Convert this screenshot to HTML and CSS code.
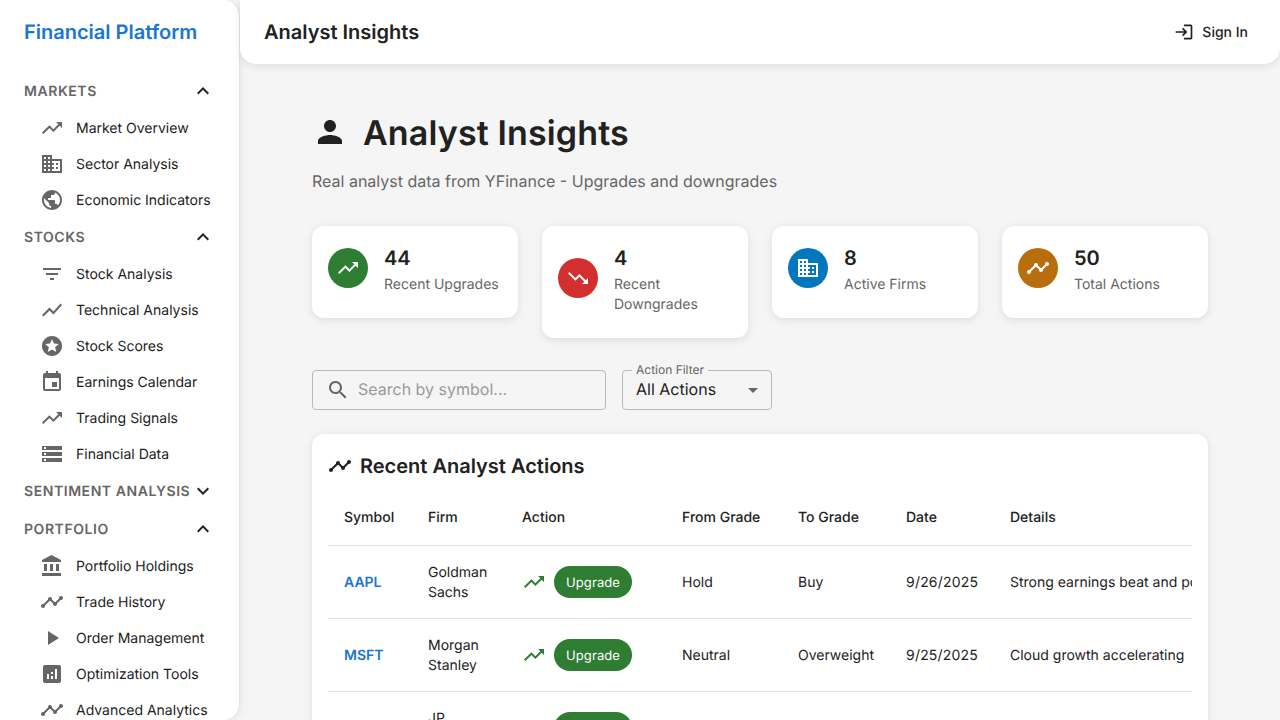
FILE: index.html
```html
<!DOCTYPE html>
<html>

<head>
    <title>Analyst Insights</title>
    <link rel="stylesheet" href="styles.css">
</head>

<body>
    <svg class="sprites" width="0" height="0">
        <symbol id="i-up" viewBox="0 0 24 24"><path d="M16 6l2.29 2.29-4.88 4.88-4-4L2 16.59 3.41 18l6-6 4 4 6.3-6.29L22 12V6z"/></symbol>
        <symbol id="i-down" viewBox="0 0 24 24"><path d="M16 18l2.29-2.29-4.88-4.88-4 4L2 7.41 3.41 6l6 6 4-4 6.3 6.29L22 12v6z"/></symbol>
        <symbol id="i-business" viewBox="0 0 24 24"><path d="M12 7V3H2v18h20V7H12zM6 19H4v-2h2v2zm0-4H4v-2h2v2zm0-4H4V9h2v2zm0-4H4V5h2v2zm4 12H8v-2h2v2zm0-4H8v-2h2v2zm0-4H8V9h2v2zm0-4H8V5h2v2zm10 12h-8v-2h2v-2h-2v-2h2v-2h-2V9h8v10zm-2-8h-2v2h2v-2zm0 4h-2v2h2v-2z"/></symbol>
        <symbol id="i-public" viewBox="0 0 24 24"><path d="M12 2C6.48 2 2 6.48 2 12s4.48 10 10 10 10-4.48 10-10S17.52 2 12 2zm-1 17.93c-3.95-.49-7-3.85-7-7.93 0-.62.08-1.21.21-1.79L9 15v1c0 1.1.9 2 2 2v1.93zm6.9-2.54c-.26-.81-1-1.39-1.9-1.39h-1v-3c0-.55-.45-1-1-1H8v-2h2c.55 0 1-.45 1-1V7h2c1.1 0 2-.9 2-2v-.41c2.93 1.19 5 4.06 5 7.41 0 2.08-.8 3.97-2.1 5.39z"/></symbol>
        <symbol id="i-filter" viewBox="0 0 24 24"><path d="M10 18h4v-2h-4v2zM3 6v2h18V6H3zm3 7h12v-2H6v2z"/></symbol>
        <symbol id="i-chart" viewBox="0 0 24 24"><path d="M3.5 18.49l6-6.01 4 4L22 6.92l-1.41-1.41-7.09 7.97-4-4L2 16.99z"/></symbol>
        <symbol id="i-stars" viewBox="0 0 24 24"><path d="M11.99 2C6.47 2 2 6.48 2 12s4.47 10 9.99 10C17.52 22 22 17.52 22 12S17.52 2 11.99 2zm4.24 16L12 15.45 7.77 18l1.12-4.81-3.73-3.23 4.92-.42L12 5l1.92 4.53 4.92.42-3.73 3.23L16.23 18z"/></symbol>
        <symbol id="i-event" viewBox="0 0 24 24"><path d="M17 12h-5v5h5v-5zM16 1v2H8V1H6v2H5c-1.11 0-1.99.9-1.99 2L3 19c0 1.1.89 2 2 2h14c1.1 0 2-.9 2-2V5c0-1.1-.9-2-2-2h-1V1h-2zm3 18H5V8h14v11z"/></symbol>
        <symbol id="i-storage" viewBox="0 0 24 24"><path d="M2 20h20v-4H2v4zm2-3h2v2H4v-2zM2 4v4h20V4H2zm4 3H4V5h2v2zm-4 7h20v-4H2v4zm2-3h2v2H4v-2z"/></symbol>
        <symbol id="i-bank" viewBox="0 0 24 24"><path d="M4 10v7h3v-7H4zm6 0v7h3v-7h-3zM2 22h19v-3H2v3zm14-12v7h3v-7h-3zm-4.5-9L2 6v2h19V6l-9.5-5z"/></symbol>
        <symbol id="i-timeline" viewBox="0 0 24 24"><path d="M23 8c0 1.1-.9 2-2 2-.18 0-.35-.02-.51-.07l-3.56 3.55c.05.16.07.34.07.52 0 1.1-.9 2-2 2s-2-.9-2-2c0-.18.02-.36.07-.52l-2.55-2.55c-.16.05-.34.07-.52.07s-.36-.02-.52-.07l-4.55 4.56c.05.16.07.33.07.51 0 1.1-.9 2-2 2s-2-.9-2-2 .9-2 2-2c.18 0 .35.02.51.07l4.56-4.55C8.02 9.36 8 9.18 8 9c0-1.1.9-2 2-2s2 .9 2 2c0 .18-.02.36-.07.52l2.55 2.55c.16-.05.34-.07.52-.07s.36.02.52.07l3.55-3.56C19.02 8.35 19 8.18 19 8c0-1.1.9-2 2-2s2 .9 2 2z"/></symbol>
        <symbol id="i-play" viewBox="0 0 24 24"><path d="M8 5v14l11-7z"/></symbol>
        <symbol id="i-analytics" viewBox="0 0 24 24"><path d="M19 3H5c-1.1 0-2 .9-2 2v14c0 1.1.9 2 2 2h14c1.1 0 2-.9 2-2V5c0-1.1-.9-2-2-2zM9 17H7v-5h2v5zm4 0h-2v-3h2v3zm0-5h-2v-2h2v2zm4 5h-2V7h2v10z"/></symbol>
        <symbol id="i-person" viewBox="0 0 24 24"><path d="M12 12c2.21 0 4-1.79 4-4s-1.79-4-4-4-4 1.79-4 4 1.79 4 4 4zm0 2c-2.67 0-8 1.34-8 4v2h16v-2c0-2.66-5.33-4-8-4z"/></symbol>
        <symbol id="i-login" viewBox="0 0 24 24"><path d="M11 7L9.6 8.4l2.6 2.6H2v2h10.2l-2.6 2.6L11 17l5-5-5-5zm9 12h-8v2h8c1.1 0 2-.9 2-2V5c0-1.1-.9-2-2-2h-8v2h8v14z"/></symbol>
        <symbol id="i-search" viewBox="0 0 24 24"><path d="M15.5 14h-.79l-.28-.27C15.41 12.59 16 11.11 16 9.5 16 5.91 13.09 3 9.5 3S3 5.91 3 9.5 5.91 16 9.5 16c1.61 0 3.09-.59 4.23-1.57l.27.28v.79l5 4.99L20.49 19l-4.99-5zm-6 0C7.01 14 5 11.99 5 9.5S7.01 5 9.5 5 14 7.01 14 9.5 11.99 14 9.5 14z"/></symbol>
        <symbol id="i-less" viewBox="0 0 24 24"><path d="M12 8l-6 6 1.41 1.41L12 10.83l4.59 4.58L18 14z"/></symbol>
        <symbol id="i-more" viewBox="0 0 24 24"><path d="M16.59 8.59L12 13.17 7.41 8.59 6 10l6 6 6-6z"/></symbol>
        <symbol id="i-drop" viewBox="0 0 24 24"><path d="M7 10l5 5 5-5z"/></symbol>
    </svg>

    <div class="app">
        <nav class="sidebar">
            <div class="brand">Financial Platform</div>
            <div class="nav-list">
                <div class="nav-head"><span>MARKETS</span><svg class="icon"><use href="#i-less"/></svg></div>
                <a class="nav-item"><svg class="icon"><use href="#i-up"/></svg>Market Overview</a>
                <a class="nav-item"><svg class="icon"><use href="#i-business"/></svg>Sector Analysis</a>
                <a class="nav-item"><svg class="icon"><use href="#i-public"/></svg>Economic Indicators</a>

                <div class="nav-head"><span>STOCKS</span><svg class="icon"><use href="#i-less"/></svg></div>
                <a class="nav-item"><svg class="icon"><use href="#i-filter"/></svg>Stock Analysis</a>
                <a class="nav-item"><svg class="icon"><use href="#i-chart"/></svg>Technical Analysis</a>
                <a class="nav-item"><svg class="icon"><use href="#i-stars"/></svg>Stock Scores</a>
                <a class="nav-item"><svg class="icon"><use href="#i-event"/></svg>Earnings Calendar</a>
                <a class="nav-item"><svg class="icon"><use href="#i-up"/></svg>Trading Signals</a>
                <a class="nav-item"><svg class="icon"><use href="#i-storage"/></svg>Financial Data</a>

                <div class="nav-head"><span>SENTIMENT ANALYSIS</span><svg class="icon"><use href="#i-more"/></svg></div>

                <div class="nav-head"><span>PORTFOLIO</span><svg class="icon"><use href="#i-less"/></svg></div>
                <a class="nav-item"><svg class="icon"><use href="#i-bank"/></svg>Portfolio Holdings</a>
                <a class="nav-item"><svg class="icon"><use href="#i-timeline"/></svg>Trade History</a>
                <a class="nav-item"><svg class="icon"><use href="#i-play"/></svg>Order Management</a>
                <a class="nav-item"><svg class="icon"><use href="#i-analytics"/></svg>Optimization Tools</a>
                <a class="nav-item"><svg class="icon"><use href="#i-timeline"/></svg>Advanced Analytics</a>
            </div>
        </nav>

        <div class="content">
            <header class="topbar">
                <div class="topbar-title">Analyst Insights</div>
                <button class="sign-in"><svg class="icon-sm"><use href="#i-login"/></svg>Sign In</button>
            </header>

            <main class="main">
                <div class="page-head">
                    <svg class="page-icon"><use href="#i-person"/></svg>
                    <h1>Analyst Insights</h1>
                </div>
                <p class="subtitle">Real analyst data from YFinance - Upgrades and downgrades</p>

                <div class="stats">
                    <div class="stat">
                        <div class="stat-icon green"><svg class="icon"><use href="#i-up"/></svg></div>
                        <div><div class="stat-num">44</div><div class="stat-label">Recent Upgrades</div></div>
                    </div>
                    <div class="stat">
                        <div class="stat-icon red"><svg class="icon"><use href="#i-down"/></svg></div>
                        <div><div class="stat-num">4</div><div class="stat-label">Recent Downgrades</div></div>
                    </div>
                    <div class="stat">
                        <div class="stat-icon blue"><svg class="icon"><use href="#i-business"/></svg></div>
                        <div><div class="stat-num">8</div><div class="stat-label">Active Firms</div></div>
                    </div>
                    <div class="stat">
                        <div class="stat-icon orange"><svg class="icon"><use href="#i-timeline"/></svg></div>
                        <div><div class="stat-num">50</div><div class="stat-label">Total Actions</div></div>
                    </div>
                </div>

                <div class="filters">
                    <div class="search">
                        <svg class="icon"><use href="#i-search"/></svg>
                        <span class="field-text placeholder">Search by symbol...</span>
                    </div>
                    <div class="select">
                        <span class="select-label">Action Filter</span>
                        <span class="field-text">All Actions</span>
                        <svg class="icon select-arrow"><use href="#i-drop"/></svg>
                    </div>
                </div>

                <section class="panel">
                    <h2><svg class="icon"><use href="#i-timeline"/></svg>Recent Analyst Actions</h2>
                    <div class="table-wrap">
                        <table>
                            <colgroup>
                                <col class="c-symbol"><col class="c-firm"><col class="c-action"><col class="c-from"><col class="c-to"><col class="c-date"><col class="c-details">
                            </colgroup>
                            <thead>
                                <tr><th>Symbol</th><th>Firm</th><th>Action</th><th>From Grade</th><th>To Grade</th><th>Date</th><th>Details</th></tr>
                            </thead>
                            <tbody>
                                <tr>
                                    <td class="symbol">AAPL</td>
                                    <td>Goldman Sachs</td>
                                    <td class="action-cell"><div class="action"><svg class="icon"><use href="#i-up"/></svg><span class="chip">Upgrade</span></div></td>
                                    <td>Hold</td>
                                    <td>Buy</td>
                                    <td class="date">9/26/2025</td>
                                    <td class="details">Strong earnings beat and positive guidance</td>
                                </tr>
                                <tr>
                                    <td class="symbol">MSFT</td>
                                    <td>Morgan Stanley</td>
                                    <td class="action-cell"><div class="action"><svg class="icon"><use href="#i-up"/></svg><span class="chip">Upgrade</span></div></td>
                                    <td>Neutral</td>
                                    <td>Overweight</td>
                                    <td class="date">9/25/2025</td>
                                    <td class="details">Cloud growth accelerating</td>
                                </tr>
                                <tr>
                                    <td class="symbol">NVDA</td>
                                    <td>JP Morgan</td>
                                    <td class="action-cell"><div class="action"><svg class="icon"><use href="#i-up"/></svg><span class="chip">Upgrade</span></div></td>
                                    <td>Neutral</td>
                                    <td>Buy</td>
                                    <td class="date">9/24/2025</td>
                                    <td class="details">AI demand remains strong</td>
                                </tr>
                            </tbody>
                        </table>
                    </div>
                </section>
            </main>
        </div>
    </div>
</body>

</html>
```

FILE: styles.css
```css
* {
    box-sizing: border-box;
}

body {
    margin: 0;
    height: 720px;
    overflow: hidden;
    background-color: #f5f5f5;
    color: #212121;
    font-family: Inter, 'Liberation Sans', sans-serif;
    font-size: 14px;
    text-rendering: geometricPrecision;
}

.sprites {
    position: absolute;
}

svg {
    fill: currentColor;
    flex-shrink: 0;
}

.icon {
    width: 24px;
    height: 24px;
}

.icon-sm {
    width: 20px;
    height: 20px;
}

.app {
    display: flex;
    height: 720px;
}

/* sidebar */
.sidebar {
    width: 240px;
    flex-shrink: 0;
    height: 720px;
    overflow: hidden;
    background-color: white;
    border-right: 1px solid #e4e4e4;
    border-radius: 0 16px 16px 0;
    box-shadow: 0 2px 8px rgba(0, 0, 0, 0.08);
}

.brand {
    height: 64px;
    padding-left: 24px;
    line-height: 64px;
    color: #1976d2;
    font-size: 20px;
    font-weight: 600;
}

.nav-list {
    padding-top: 8px;
}

.nav-head {
    display: flex;
    align-items: center;
    justify-content: space-between;
    height: 38px;
    padding: 0 24px;
    color: #666666;
    font-size: 14px;
    font-weight: 600;
    letter-spacing: 0.56px;
    white-space: nowrap;
}

.nav-head .icon {
    color: #212121;
}

.nav-item {
    display: flex;
    align-items: center;
    gap: 12px;
    height: 36px;
    padding-left: 40px;
}

.nav-item .icon {
    color: #666666;
}

/* top bar */
.content {
    flex: 1;
    min-width: 0;
}

.topbar {
    display: flex;
    align-items: center;
    justify-content: space-between;
    height: 64px;
    padding: 0 24px;
    background-color: white;
    border-radius: 0 0 16px 16px;
    box-shadow: 0 2px 8px rgba(0, 0, 0, 0.1);
}

.topbar-title {
    font-size: 20px;
    font-weight: 600;
}

.sign-in {
    display: flex;
    align-items: center;
    gap: 8px;
    padding: 6px 8px;
    border: none;
    background: none;
    color: #212121;
    font-family: inherit;
    font-size: 14px;
    font-weight: 500;
    text-rendering: geometricPrecision;
}

/* main */
.main {
    padding: 48px 72px 0;
}

.page-head {
    display: flex;
    align-items: center;
    gap: 15px;
    height: 40px;
}

.page-icon {
    width: 36px;
    height: 36px;
}

h1 {
    margin: 0;
    padding-top: 2px;
    font-size: 34px;
    font-weight: 600;
    letter-spacing: 0.13px;
}

.subtitle {
    margin: 17px 0 0;
    color: #666666;
    font-size: 16px;
    line-height: 24px;
}

.stats {
    display: flex;
    align-items: flex-start;
    gap: 24px;
    margin-top: 33px;
}

.stat {
    display: flex;
    align-items: center;
    gap: 16px;
    flex: 1;
    min-width: 0;
    padding: 16px 16px 24px;
    background-color: white;
    border-radius: 12px;
    box-shadow: 0 2px 8px rgba(0, 0, 0, 0.1);
}

.stat-icon {
    display: flex;
    align-items: center;
    justify-content: center;
    width: 40px;
    height: 40px;
    flex-shrink: 0;
    border-radius: 50%;
    color: white;
}

.green {
    background-color: #2e7d32;
}

.red {
    background-color: #d32f2f;
}

.blue {
    background-color: #0277bd;
}

.orange {
    background-color: #b86e0c;
}

.stat-num {
    font-size: 20px;
    font-weight: 600;
    line-height: 32px;
}

.stat-label {
    margin-bottom: -1px;
    padding-top: 1px;
    color: #666666;
    line-height: 20px;
}

/* filters */
.filters {
    display: flex;
    gap: 16px;
    margin-top: 32px;
}

.search,
.select {
    display: flex;
    align-items: center;
    height: 40px;
    border: 1px solid #b9b9b9;
    border-radius: 4px;
    font-size: 16px;
}

.search {
    width: 294px;
    padding-left: 13px;
    gap: 8px;
}

.search .icon {
    color: #666666;
}

.field-text {
    padding-bottom: 2px;
}

.placeholder {
    color: #9a9a9a;
}

.select {
    position: relative;
    width: 150px;
    padding-left: 13px;
}

.select-label {
    position: absolute;
    left: 9px;
    top: -8px;
    padding: 0 4px;
    background-color: #f5f5f5;
    color: #666666;
    font-size: 12px;
    line-height: 14px;
}

.select-arrow {
    position: absolute;
    right: 6px;
    top: 7px;
    color: #666666;
}

/* table */
.panel {
    margin-top: 24px;
    padding: 16px;
    background-color: white;
    border-radius: 12px;
    box-shadow: 0 2px 8px rgba(0, 0, 0, 0.1);
}

h2 {
    display: flex;
    align-items: center;
    gap: 8px;
    margin: 0 0 8px;
    font-size: 20px;
    font-weight: 600;
    line-height: 32px;
}

.table-wrap {
    overflow: hidden;
}

table {
    width: 1000px;
    table-layout: fixed;
    border-collapse: separate;
    border-spacing: 0;
}

.c-symbol {
    width: 84px;
}

.c-firm {
    width: 94px;
}

.c-action {
    width: 160px;
}

.c-from {
    width: 116px;
}

.c-to {
    width: 108px;
}

.c-date {
    width: 104px;
}

.c-details {
    width: 334px;
}

th,
td {
    padding: 16px;
    border-bottom: 1px solid #e0e0e0;
    text-align: left;
    line-height: 20px;
}

th {
    height: 56px;
    font-weight: 500;
}

td {
    height: 73px;
    padding-top: 17px;
    padding-bottom: 15px;
}

td.action-cell {
    padding-top: 16px;
    padding-bottom: 16px;
}

.symbol {
    color: #1976d2;
    font-weight: 600;
}

.date {
    letter-spacing: 0.2px;
}

.details {
    white-space: nowrap;
}

.action {
    display: flex;
    align-items: center;
    gap: 8px;
    color: #2e7d32;
}

.chip {
    height: 32px;
    padding: 0 12px;
    border-radius: 16px;
    background-color: #2e7d32;
    color: white;
    font-size: 13px;
    letter-spacing: 0.1px;
    line-height: 34px;
}
```
